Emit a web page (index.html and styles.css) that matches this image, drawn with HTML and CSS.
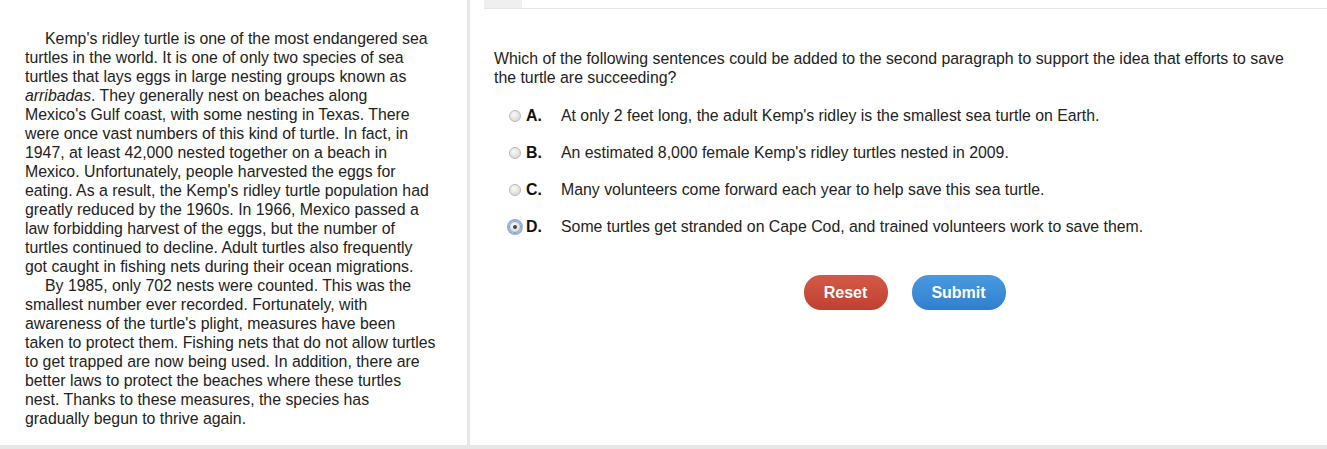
FILE: index.html
```html
<!DOCTYPE html>
<html>
<head>
<meta charset="utf-8">
<link rel="stylesheet" href="styles.css">
</head>
<body>
<div class="page">
  <div class="passage">
    <p class="para">Kemp's ridley turtle is one of the most endangered sea<br>turtles in the world. It is one of only two species of sea<br>turtles that lays eggs in large nesting groups known as<br><em>arribadas</em>. They generally nest on beaches along<br>Mexico's Gulf coast, with some nesting in Texas. There<br>were once vast numbers of this kind of turtle. In fact, in<br>1947, at least 42,000 nested together on a beach in<br>Mexico. Unfortunately, people harvested the eggs for<br>eating. As a result, the Kemp's ridley turtle population had<br>greatly reduced by the 1960s. In 1966, Mexico passed a<br>law forbidding harvest of the eggs, but the number of<br>turtles continued to decline. Adult turtles also frequently<br>got caught in fishing nets during their ocean migrations.</p>
    <p class="para">By 1985, only 702 nests were counted. This was the<br>smallest number ever recorded. Fortunately, with<br>awareness of the turtle's plight, measures have been<br>taken to protect them. Fishing nets that do not allow turtles<br>to get trapped are now being used. In addition, there are<br>better laws to protect the beaches where these turtles<br>nest. Thanks to these measures, the species has<br>gradually begun to thrive again.</p>
  </div>
  <div class="question">
    <div class="tabbar"><span class="tab"></span></div>
    <p class="stem">Which of the following sentences could be added to the second paragraph to support the idea that efforts to save the turtle are succeeding?</p>
    <ul class="options">
      <li class="option"><span class="radio"></span><span class="letter">A.</span><span class="text">At only 2 feet long, the adult Kemp's ridley is the smallest sea turtle on Earth.</span></li>
      <li class="option"><span class="radio"></span><span class="letter">B.</span><span class="text">An estimated 8,000 female Kemp's ridley turtles nested in 2009.</span></li>
      <li class="option"><span class="radio"></span><span class="letter">C.</span><span class="text">Many volunteers come forward each year to help save this sea turtle.</span></li>
      <li class="option"><span class="radio checked"></span><span class="letter">D.</span><span class="text">Some turtles get stranded on Cape Cod, and trained volunteers work to save them.</span></li>
    </ul>
    <div class="buttons">
      <button class="btn reset">Reset</button>
      <button class="btn submit">Submit</button>
    </div>
  </div>
</div>
</body>
</html>
```
FILE: styles.css
```css
html, body {
  margin: 0;
  padding: 0;
}
body {
  background: #e6e6e6;
  font-family: "Liberation Sans", Arial, sans-serif;
  color: #222;
  width: 1327px;
  height: 449px;
  overflow: hidden;
}
.page {
  display: flex;
  gap: 3px;
  height: 445px;
}
.passage {
  width: 467px;
  box-sizing: border-box;
  background: #fff;
  padding: 29px 20px 0 25px;
  font-size: 15.85px;
  line-height: 19px;
}
.para {
  margin: 0;
  text-indent: 20px;
  white-space: nowrap;
}
.question {
  flex: 1;
  background: #fff;
  padding: 0 0 0 24px;
  font-size: 15.85px;
  line-height: 19px;
}
.tabbar {
  height: 8px;
  border-bottom: 1px solid #e6e6e6;
  margin-left: -10px;
}
.tab {
  display: block;
  width: 38px;
  height: 8px;
  background: #efefef;
}
.stem {
  margin: 40px 30px 0 0;
}
.options {
  list-style: none;
  margin: 10px 0 0 0;
  padding: 0 0 0 15px;
}
.option {
  display: flex;
  align-items: center;
  height: 37px;
}
.radio {
  width: 12px;
  height: 12px;
  border-radius: 50%;
  border: 1px solid #b8b8b8;
  background: radial-gradient(circle at 40% 35%, #fafafa, #d0d0d0);
  box-sizing: border-box;
  margin-right: 5px;
  position: relative;
}
.radio.checked {
  outline: 2px solid #8fb0e0;
  outline-offset: 0;
  border-color: #9a9a9a;
}
.radio.checked::after {
  content: "";
  position: absolute;
  left: 3px;
  top: 3px;
  width: 4px;
  height: 4px;
  border-radius: 50%;
  background: #444;
}
.letter {
  font-weight: bold;
  width: 35px;
  color: #111;
}
.text {
  color: #222;
}
.buttons {
  display: flex;
  justify-content: center;
  gap: 24px;
  margin-top: 30px;
  padding-right: 12px;
}
.btn {
  border: none;
  border-radius: 17px;
  height: 35px;
  padding: 0;
  color: #fff;
  font-family: "Liberation Sans", Arial, sans-serif;
  font-size: 16px;
  font-weight: bold;
}
.reset {
  width: 84px;
  background: linear-gradient(#d35a48, #c0402f);
}
.submit {
  width: 94px;
  background: linear-gradient(#4a9ae0, #2f7fcf);
}
```
